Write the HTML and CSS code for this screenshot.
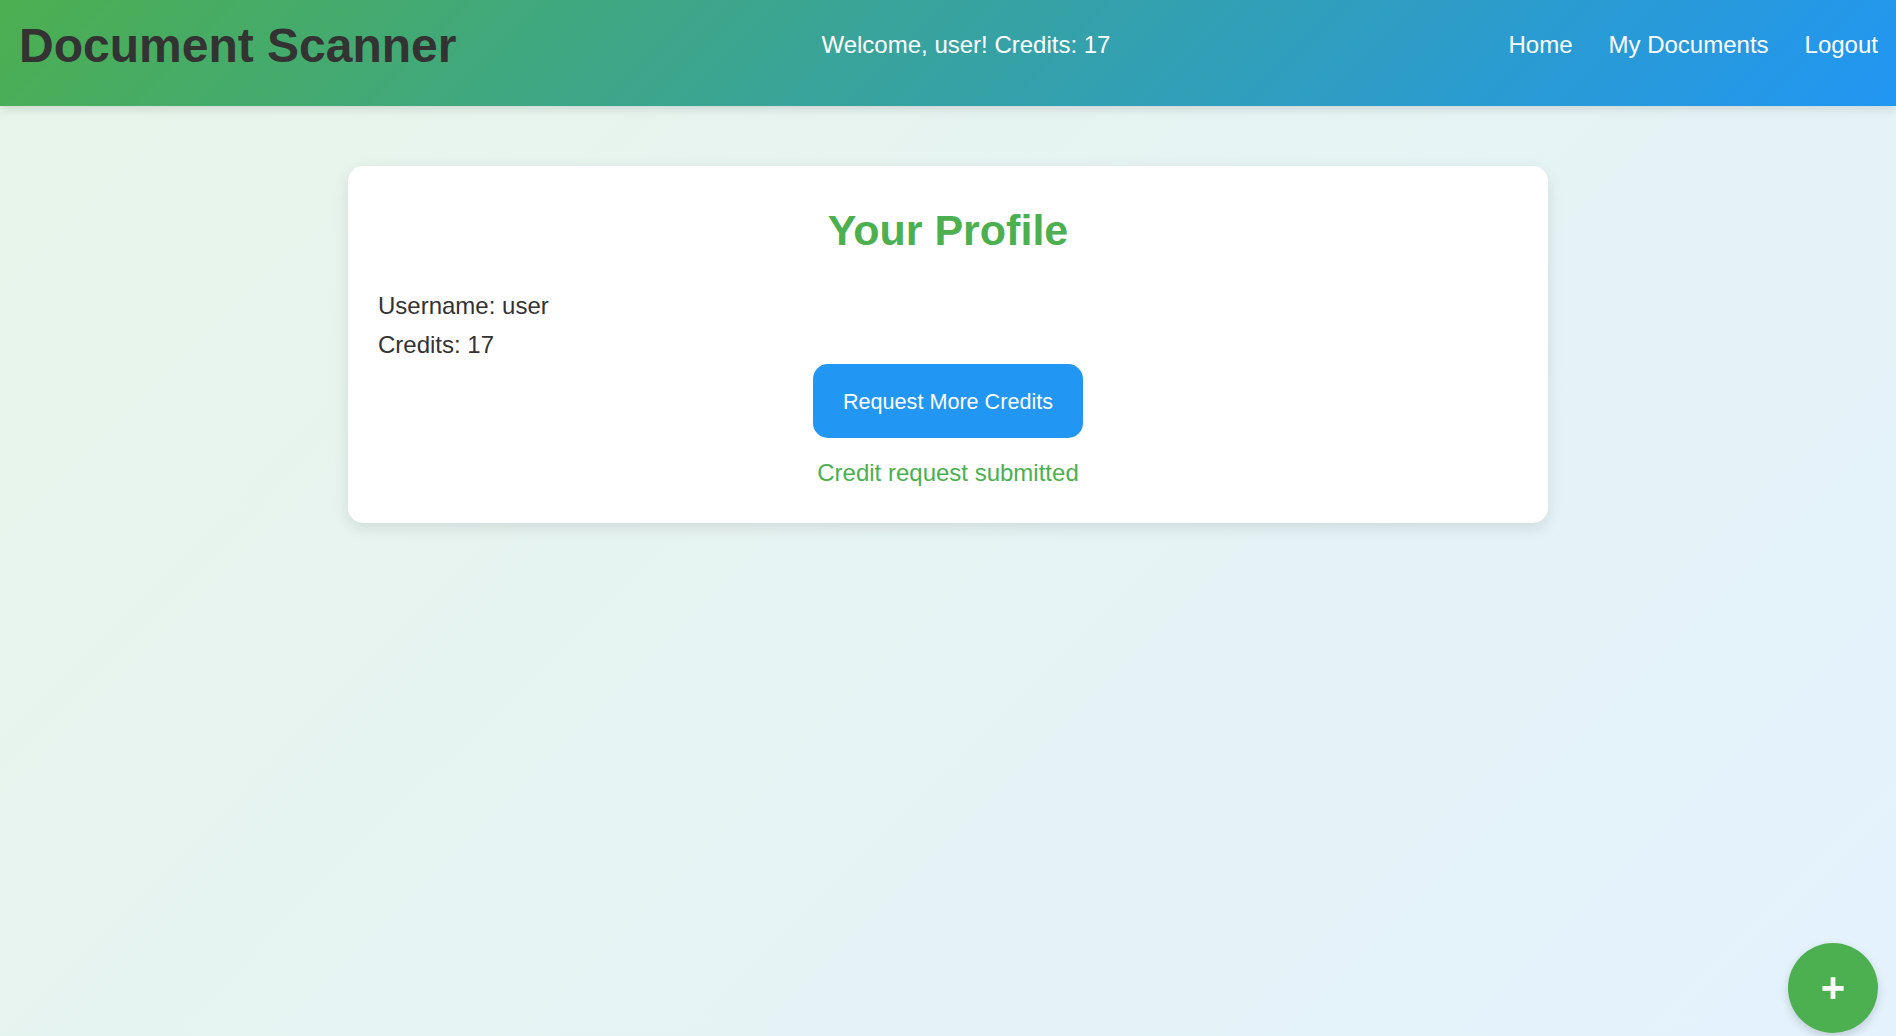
FILE: index.html
```html
<!DOCTYPE html>
<html lang="en">
<head>
<meta charset="utf-8">
<title>Document Scanner - Profile</title>
<link rel="stylesheet" href="styles.css">
</head>
<body>
<header class="topbar">
  <h1 class="brand">Document Scanner</h1>
  <div class="welcome">Welcome, user! Credits: 17</div>
  <nav class="nav">
    <a href="#" class="nav-link">Home</a>
    <a href="#" class="nav-link">My Documents</a>
    <a href="#" class="nav-link">Logout</a>
  </nav>
</header>
<main class="main">
  <section class="card">
    <h2 class="card-title">Your Profile</h2>
    <p class="info">Username: user</p>
    <p class="info">Credits: 17</p>
    <div class="actions">
      <button class="btn">Request More Credits</button>
    </div>
    <p class="message">Credit request submitted</p>
  </section>
</main>
<button class="fab" aria-label="Add">+</button>
</body>
</html>
```

FILE: styles.css
```css
* { box-sizing: border-box; }

html, body {
  margin: 0;
  padding: 0;
}

body {
  min-height: 100vh;
  font-family: "Liberation Sans", Arial, sans-serif;
  color: #333;
  background: linear-gradient(135deg, #e8f5e9 0%, #e3f2fd 100%);
}

.topbar {
  height: 106px;
  display: flex;
  justify-content: space-between;
  align-items: center;
  padding: 0 18px 16px 19px;
  background: linear-gradient(135deg, #4caf50 0%, #2196f3 100%);
  box-shadow: 0 3px 10px rgba(0, 0, 0, 0.12);
}

.brand {
  margin: 0;
  font-size: 48px;
  font-weight: bold;
  color: #333;
  line-height: 55px;
}

.welcome {
  font-size: 24px;
  color: #fff;
  margin-left: 3px;
}

.nav {
  display: flex;
}

.nav-link {
  margin-left: 36px;
  font-size: 24px;
  color: #fff;
  text-decoration: none;
}

.main {
  display: flex;
  justify-content: center;
  padding-top: 60px;
}

.card {
  width: 1200px;
  background: #fff;
  border-radius: 15px;
  padding: 30px 30px 37px;
  box-shadow: 0 5px 15px rgba(0, 0, 0, 0.1);
}

.card-title {
  margin: 10px 0 37px;
  text-align: center;
  font-size: 43px;
  line-height: 49px;
  color: #4caf50;
  font-weight: bold;
}

.info {
  margin: 0 0 12px;
  font-size: 24px;
  line-height: 27px;
  color: #333;
}

.info + .info {
  margin-bottom: 6px;
}

.actions {
  display: flex;
  justify-content: center;
}

.btn {
  font-family: "Liberation Sans", Arial, sans-serif;
  font-size: 21.6px;
  line-height: 25px;
  padding: 25px 30px 24px;
  background: #2196f3;
  color: #fff;
  border: none;
  border-radius: 15px;
}

.message {
  margin: 21px 0 0;
  text-align: center;
  font-size: 24px;
  line-height: 27px;
  color: #4caf50;
}

.fab {
  position: fixed;
  right: 18px;
  bottom: 3px;
  width: 90px;
  height: 90px;
  border-radius: 50%;
  border: none;
  background: #4caf50;
  color: #fff;
  font-family: "Liberation Sans", Arial, sans-serif;
  font-size: 42px;
  font-weight: bold;
  line-height: 90px;
  padding: 0;
  box-shadow: 0 4px 10px rgba(0, 0, 0, 0.15);
}
```
